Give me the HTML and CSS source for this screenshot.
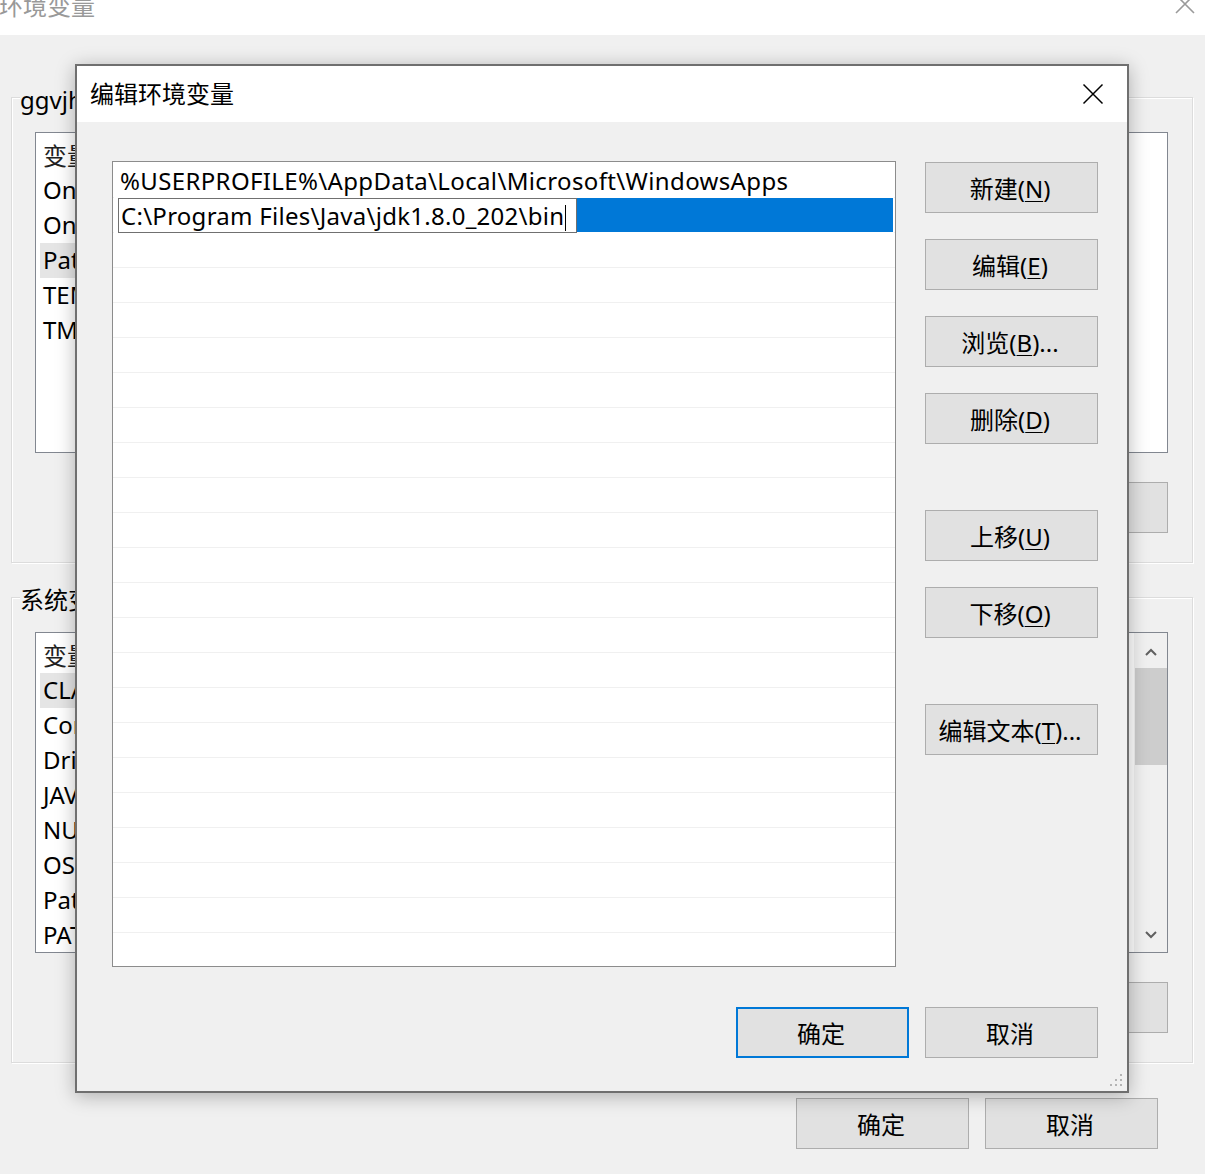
FILE: index.html
```html
<!DOCTYPE html>
<html lang="zh-CN">
<head>
    <meta charset="UTF-8">
    <meta name="viewport" content="width=device-width, initial-scale=1.0">
    <title>编辑环境变量</title>
    <link rel="stylesheet" href="styles.css">
</head>
<body>
    <div class="back-window">
        <div class="back-title">
            <span class="back-caption">环境变量</span>
            <svg class="back-close" width="22" height="22" viewBox="0 0 22 22">
                <path d="M2 2 L20 20 M20 2 L2 20" stroke="#9a9a9a" stroke-width="1.6" fill="none"/>
            </svg>
        </div>
        <div class="back-body">
            <div class="group">
                <span class="group-label">ggvjh 的用户变量(<u>U</u>)</span>
                <div class="var-list">
                    <div class="var-head"><span class="col-name">变量</span><span>值</span></div>
                    <div class="var-row">OneDrive</div>
                    <div class="var-row">OneDriveConsumer</div>
                    <div class="var-row selected">Path</div>
                    <div class="var-row">TEMP</div>
                    <div class="var-row">TMP</div>
                </div>
                <div class="group-buttons">
                    <button class="btn">新建(<u>N</u>)...</button>
                    <button class="btn">编辑(<u>E</u>)...</button>
                    <button class="btn">删除(<u>D</u>)</button>
                </div>
            </div>

            <div class="group">
                <span class="group-label">系统变量(<u>S</u>)</span>
                <div class="var-list">
                    <div class="var-head"><span class="col-name">变量</span><span>值</span></div>
                    <div class="var-row selected">CLASSPATH</div>
                    <div class="var-row">ComSpec</div>
                    <div class="var-row">DriverData</div>
                    <div class="var-row">JAVA_HOME</div>
                    <div class="var-row">NUMBER_OF_PROCESSORS</div>
                    <div class="var-row">OS</div>
                    <div class="var-row">Path</div>
                    <div class="var-row">PATHEXT</div>
                    <div class="scrollbar">
                        <svg class="scroll-arrow" width="14" height="10" viewBox="0 0 14 10">
                            <path d="M2 8 L7 3 L12 8" stroke="#606060" stroke-width="2" fill="none"/>
                        </svg>
                        <div class="scroll-thumb"></div>
                        <svg class="scroll-arrow down" width="14" height="10" viewBox="0 0 14 10">
                            <path d="M2 2 L7 7 L12 2" stroke="#606060" stroke-width="2" fill="none"/>
                        </svg>
                    </div>
                </div>
                <div class="group-buttons">
                    <button class="btn">新建(<u>W</u>)...</button>
                    <button class="btn">编辑(<u>I</u>)...</button>
                    <button class="btn">删除(<u>L</u>)</button>
                </div>
            </div>

            <div class="back-footer">
                <button class="btn">确定</button>
                <button class="btn">取消</button>
            </div>
        </div>
    </div>

    <div class="dialog">
        <div class="dialog-title">
            <span>编辑环境变量</span>
            <svg class="dialog-close" width="22" height="22" viewBox="0 0 22 22">
                <path d="M1.5 1.5 L20.5 20.5 M20.5 1.5 L1.5 20.5" stroke="#000" stroke-width="1.5" fill="none"/>
            </svg>
        </div>
        <div class="dialog-body">
            <div class="path-list">
                <div class="path-row">%USERPROFILE%\AppData\Local\Microsoft\WindowsApps</div>
                <div class="path-row editing">
                    <span class="path-edit">C:\Program Files\Java\jdk1.8.0_202\bin<span class="caret"></span></span>
                    <span class="path-selection"></span>
                </div>
            </div>
            <div class="side-buttons">
                <button class="btn">新建(<u>N</u>)</button>
                <button class="btn">编辑(<u>E</u>)</button>
                <button class="btn">浏览(<u>B</u>)...</button>
                <button class="btn">删除(<u>D</u>)</button>
                <button class="btn spaced">上移(<u>U</u>)</button>
                <button class="btn">下移(<u>O</u>)</button>
                <button class="btn spaced">编辑文本(<u>T</u>)...</button>
            </div>
            <div class="dialog-footer">
                <button class="btn default">确定</button>
                <button class="btn">取消</button>
            </div>
        </div>
        <svg class="grip" width="16" height="16" viewBox="0 0 16 16">
            <rect x="12" y="2" width="2" height="2" fill="#b4b4b4"/>
            <rect x="7" y="7" width="2" height="2" fill="#b4b4b4"/>
            <rect x="12" y="7" width="2" height="2" fill="#b4b4b4"/>
            <rect x="2" y="12" width="2" height="2" fill="#b4b4b4"/>
            <rect x="7" y="12" width="2" height="2" fill="#b4b4b4"/>
            <rect x="12" y="12" width="2" height="2" fill="#b4b4b4"/>
        </svg>
    </div>
</body>
</html>
```

FILE: styles.css
```css
body {
    margin: 0;
    width: 1205px;
    height: 1174px;
    overflow: hidden;
    position: relative;
    background-color: #f0f0f0;
    font-family: "Noto Sans", "Noto Sans CJK SC", sans-serif;
    font-size: 24px;
    color: #000;
}
u {
    text-underline-offset: 3px;
    text-decoration-thickness: 1px;
}

/* back window: 环境变量 */
.back-title {
    position: relative;
    height: 35px;
    background-color: #fff;
    overflow: hidden;
}
.back-caption {
    display: block;
    margin-top: -12px;
    margin-left: -1px;
    line-height: 36px;
    color: #999;
}
.back-close {
    position: absolute;
    right: 9px;
    top: -7px;
}
.back-body {
    padding: 62px 12px 0 11px;
}
.group {
    position: relative;
    height: 466px;
    box-sizing: border-box;
    padding: 34px 24px 0 23px;
    border: 1px solid #dcdcdc;
    box-shadow: inset 1px 1px 0 #fff, 1px 1px 0 #fff;
}
.group + .group {
    margin-top: 34px;
}
.group-label {
    position: absolute;
    top: -12px;
    left: 8px;
    padding-right: 2px;
    line-height: 28px;
    background-color: #f0f0f0;
}
.var-list {
    position: relative;
    height: 321px;
    box-sizing: border-box;
    border: 1px solid #828790;
    background-color: #fff;
    overflow: hidden;
}
.var-head {
    display: flex;
    height: 40px;
    box-sizing: border-box;
    padding: 2px 0 0 7px;
    align-items: center;
    color: #222;
}
.col-name {
    width: 400px;
}
.var-row {
    width: 400px;
    height: 35px;
    line-height: 34px;
    margin-left: 4px;
    padding-left: 3px;
}
.var-row.selected {
    background-color: #e5e5e5;
}
.scrollbar {
    position: absolute;
    top: 0;
    right: 0;
    bottom: 0;
    width: 33px;
    display: flex;
    flex-direction: column;
    align-items: center;
    background-color: #f0f0f0;
}
.scroll-arrow {
    margin-top: 14px;
}
.scroll-arrow.down {
    margin-top: auto;
    margin-bottom: 12px;
}
.scroll-thumb {
    width: 32px;
    height: 97px;
    margin-top: 11px;
    background-color: #cdcdcd;
}
.group-buttons {
    display: flex;
    justify-content: flex-end;
    gap: 16px;
    margin-top: 29px;
}
.back-footer {
    display: flex;
    justify-content: flex-end;
    gap: 16px;
    margin-top: 35px;
    padding-right: 35px;
}

/* buttons */
.btn {
    width: 173px;
    height: 51px;
    padding: 0 3px 0 0;
    box-sizing: border-box;
    border: 1px solid #adadad;
    background-color: #e1e1e1;
    font-family: inherit;
    font-size: 24px;
    color: #000;
}
.btn.default {
    border: 2px solid #0078d7;
}

/* front dialog: 编辑环境变量 */
.dialog {
    position: absolute;
    left: 75px;
    top: 64px;
    width: 1054px;
    height: 1029px;
    box-sizing: border-box;
    border: 2px solid #6f6f6f;
    background-color: #f0f0f0;
    box-shadow: 0 3px 18px rgba(0, 0, 0, 0.28);
}
.dialog-title {
    display: flex;
    align-items: center;
    height: 56px;
    box-sizing: border-box;
    padding: 0 0 3px 13px;
    background-color: #fff;
}
.dialog-close {
    margin: 3px 23px 0 auto;
}
.dialog-body {
    display: grid;
    grid-template-columns: 784px 173px;
    column-gap: 29px;
    padding: 39px 29px 0 35px;
}
.path-list {
    height: 806px;
    box-sizing: border-box;
    padding: 1px;
    border: 1px solid #8c8c8c;
    background-color: #fff;
    background-image: repeating-linear-gradient(to bottom, transparent 0, transparent 34px, #f0f0f0 34px, #f0f0f0 35px);
    background-position: 0 1px;
    letter-spacing: 0.36px;
}
.path-row {
    height: 35px;
    line-height: 35px;
    padding-left: 6px;
    white-space: nowrap;
    background-color: #fff;
}
.path-row.editing {
    display: flex;
    padding-left: 4px;
}
.path-edit {
    width: 459px;
    height: 35px;
    box-sizing: border-box;
    padding-left: 2px;
    border: 1px solid #707070;
    background-color: #fff;
    line-height: 33px;
    letter-spacing: 0.27px;
}
.path-selection {
    flex: 1;
    height: 34px;
    margin-right: 1px;
    background-color: #0078d7;
}
.caret {
    display: inline-block;
    width: 1px;
    height: 26px;
    margin-left: 1px;
    vertical-align: -6px;
    background-color: #000;
}
.side-buttons {
    display: flex;
    flex-direction: column;
    gap: 26px;
    padding-top: 1px;
}
.side-buttons .spaced {
    margin-top: 40px;
}
.dialog-footer {
    grid-column: 1 / -1;
    display: flex;
    justify-content: flex-end;
    gap: 16px;
    margin-top: 40px;
}
.grip {
    position: absolute;
    right: 3px;
    bottom: 3px;
}
```
